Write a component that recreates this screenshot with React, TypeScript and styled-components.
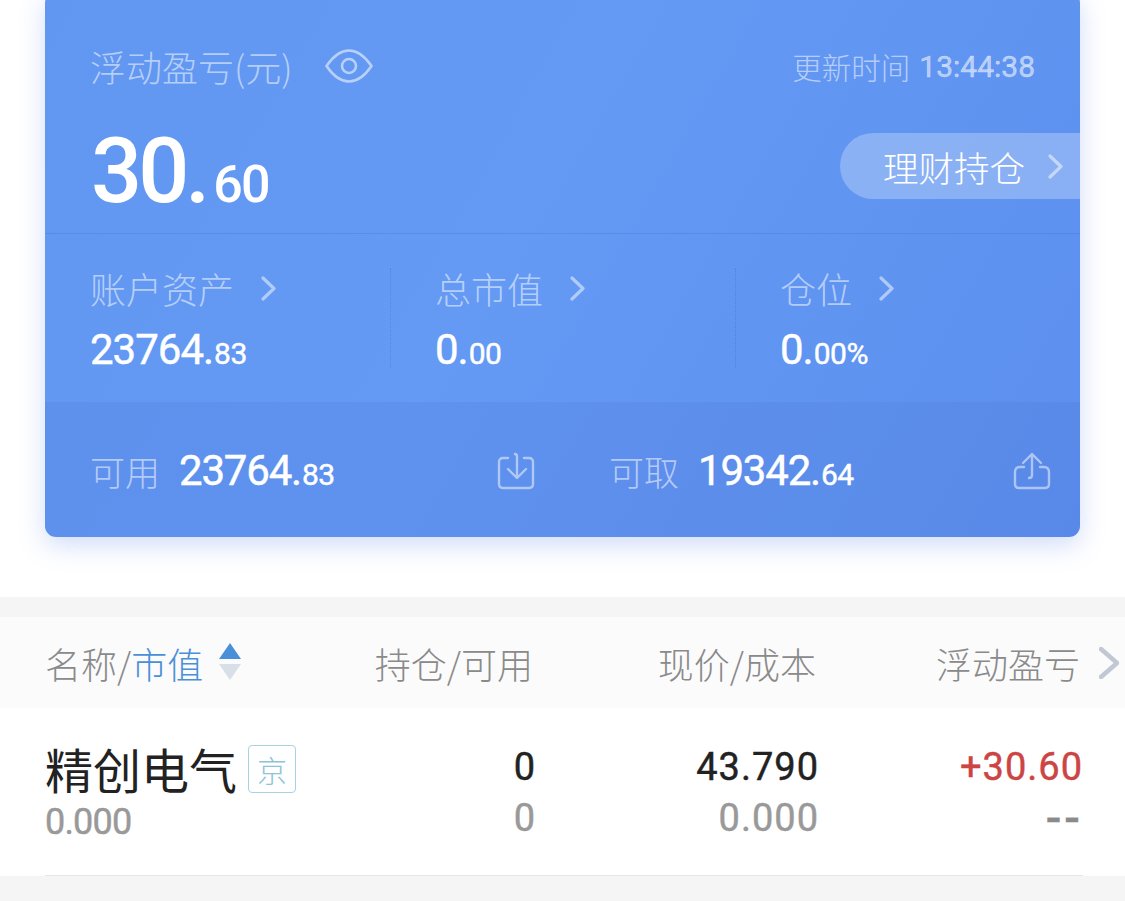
import React from "react";
import styled, { createGlobalStyle, css } from "styled-components";

const GlobalStyle = createGlobalStyle`
  html, body {
    margin: 0;
    padding: 0;
    background: #f5f5f5;
  }
  body {
    font-family: Roboto, "Noto Sans CJK SC", sans-serif;
  }
`;

// digits in the shot sit between Roboto regular and medium
const semiBold = css`
  font-weight: 400;
  -webkit-text-stroke: 0.45px currentColor;
`;

const Page = styled.div`
  width: 1125px;
  height: 901px;
  overflow: hidden;
  background: #fff;
  display: flex;
  flex-direction: column;
`;

const Card = styled.section`
  flex: none;
  margin: -8px 45px 0;
  height: 545px;
  border-radius: 11px;
  display: flex;
  flex-direction: column;
  overflow: hidden;
  background: linear-gradient(120deg, #6197f1 0%, #6499f4 45%, #5c8fee 100%);
  box-shadow: 0 8px 26px rgba(88, 128, 232, 0.28);
`;

const Summary = styled.div`
  flex: none;
  height: 242px;
  box-sizing: border-box;
  padding: 50px 0 0 45px;
  border-bottom: 1px solid rgba(60, 105, 200, 0.25);
`;

const SummaryHead = styled.div`
  display: flex;
  align-items: center;
  justify-content: space-between;
  height: 48px;
  padding-right: 45px;
`;

const Title = styled.div`
  display: flex;
  align-items: center;
  gap: 32px;
`;

const Label = styled.span`
  font-family: "Noto Sans CJK SC", sans-serif;
  font-weight: 300;
  font-size: 36px;
  line-height: 48px;
  color: rgba(255, 255, 255, 0.55);
  white-space: nowrap;
`;

const UpdatedAt = styled.div`
  display: flex;
  gap: 9px;
  align-items: center;
  font-size: 30px;
  color: rgba(255, 255, 255, 0.55);
`;

const UpdatedLabel = styled.span`
  font-family: "Noto Sans CJK SC", sans-serif;
  font-weight: 300;
  font-size: 29.5px;
`;

const UpdatedTime = styled.span`
  ${semiBold}
`;

const ProfitRow = styled.div`
  display: flex;
  align-items: flex-start;
  justify-content: space-between;
  margin-top: 37px;
`;

const AmountText = styled.div<{ $size: number; $small: number; $track: number; $gap: number; $bold?: boolean }>`
  color: #fff;
  font-size: ${(p) => p.$size}px;
  ${(p) => (p.$bold ? "font-weight: 500;" : semiBold)}
  line-height: 1;
  letter-spacing: ${(p) => p.$track}px;
  white-space: nowrap;
  small {
    margin-left: ${(p) => p.$gap}px;
    font-size: ${(p) => p.$small}px;
    letter-spacing: ${(p) => p.$track * 0.5}px;
  }
`;

const Amount = ({
  value,
  size,
  small,
  track = -1,
  gap = 1,
  suffix = "",
  bold = false,
}: {
  value: string;
  size: number;
  small: number;
  track?: number;
  gap?: number;
  suffix?: string;
  bold?: boolean;
}) => {
  const [whole, cents] = value.split(".");
  return (
    <AmountText $size={size} $small={small} $track={track} $gap={gap} $bold={bold}>
      {whole}.<small>{cents}{suffix}</small>
    </AmountText>
  );
};

const BigAmount = styled.div`
  padding-left: 1px;
`;

const Pill = styled.div`
  width: 240px;
  height: 66px;
  margin-top: 6px;
  box-sizing: border-box;
  padding-left: 43px;
  display: flex;
  align-items: center;
  gap: 23px;
  border-radius: 33px 0 0 33px;
  background: rgba(255, 255, 255, 0.27);
  color: #fff;
  font-family: "Noto Sans CJK SC", sans-serif;
  font-weight: 300;
  font-size: 35.5px;
`;

const Stats = styled.div`
  flex: none;
  height: 168px;
  box-sizing: border-box;
  padding-top: 34px;
  display: grid;
  grid-template-columns: repeat(3, 345px);
`;

const Stat = styled.div`
  height: 100px;
  box-sizing: border-box;
  padding-left: 45px;
  border-left: 1px dotted rgba(60, 105, 200, 0.4);
  &:first-child {
    border-left: 0;
  }
  & + & {
    padding-left: 44px;
  }
`;

const StatLabel = styled.div`
  display: flex;
  align-items: center;
  gap: 27px;
  height: 44px;
  margin-top: -2px;
`;

const StatValue = styled.div`
  margin-top: 19px;
`;

const Funds = styled.div`
  flex: 1;
  display: grid;
  grid-template-columns: 518px 1fr;
  align-items: center;
  padding-top: 2px;
  background: rgba(62, 88, 190, 0.1);
`;

const Fund = styled.div`
  display: flex;
  align-items: center;
  padding-left: 45px;
  padding-right: 28px;
  & + & {
    padding-left: 46px;
    padding-right: 29px;
  }
`;

const FundLabel = styled(Label)`
  font-size: 35px;
  margin-right: 19px;
`;

const FundIcon = styled.svg`
  width: 38px;
  height: 38px;
  margin-left: auto;
  fill: none;
  stroke: rgba(255, 255, 255, 0.5);
  stroke-width: 2.4;
  stroke-linecap: round;
  stroke-linejoin: round;
`;

const Chevron = styled.svg<{ $w: number; $h: number; $color: string; $sw: number }>`
  flex: none;
  width: ${(p) => p.$w}px;
  height: ${(p) => p.$h}px;
  fill: none;
  stroke: ${(p) => p.$color};
  stroke-width: ${(p) => p.$sw};
  stroke-linecap: round;
  stroke-linejoin: round;
`;

const Arrow = ({ w = 15, h = 25, color = "rgba(255,255,255,0.5)", sw = 3.2 }) => (
  <Chevron $w={w} $h={h} $color={color} $sw={sw} viewBox={`0 0 ${w} ${h}`}>
    <path d={`M2 2 L${w - 2} ${h / 2} L2 ${h - 2}`} />
  </Chevron>
);

const GrayBand = styled.div`
  flex: none;
  margin-top: 60px;
  height: 20px;
  background: #f5f5f5;
`;

const Columns = styled.div`
  display: grid;
  grid-template-columns: 1fr 200px 283px 264px;
`;

const TableHead = styled(Columns)`
  position: relative;
  flex: none;
  height: 91px;
  box-sizing: border-box;
  padding: 0 45px 0 45px;
  align-items: center;
  background: #fbfbfc;
`;

const HeadCell = styled.div`
  font-family: "Noto Sans CJK SC", sans-serif;
  font-weight: 300;
  font-size: 36px;
  line-height: 44px;
  color: #8a8a8a;
  text-align: right;
  white-space: nowrap;
`;

const NameHead = styled(HeadCell)`
  display: flex;
  align-items: center;
  text-align: left;
  em {
    font-style: normal;
    color: #4a90d9;
  }
`;

const Sort = styled.div`
  display: flex;
  flex-direction: column;
  gap: 5px;
  margin-left: 16px;
  margin-top: -3px;
`;

const Triangle = styled.i<{ $down?: boolean }>`
  display: block;
  width: 0;
  height: 0;
  border-left: 11px solid transparent;
  border-right: 11px solid transparent;
  ${(p) =>
    p.$down
      ? "border-top: 16px solid #d9dfe7;"
      : "border-bottom: 16px solid #4a90d9;"}
`;

const MoreArrow = styled.div`
  position: absolute;
  right: 6px;
  top: 30px;
  display: flex;
`;

const Row = styled(Columns)`
  flex: none;
  height: 168px;
  box-sizing: border-box;
  margin: 0 42px 0 45px;
  padding-top: 36px;
  border-bottom: 1px solid #e6e6e6;
  background: #fff;
`;

const Name = styled.div`
  display: flex;
  align-items: center;
  gap: 11px;
  height: 48px;
  font-family: "Noto Sans CJK SC", sans-serif;
  font-weight: 400;
  font-size: 48px;
  color: #222;
`;

const Tag = styled.span`
  width: 48px;
  height: 48px;
  box-sizing: border-box;
  margin-top: 1px;
  display: flex;
  align-items: center;
  justify-content: center;
  border: 1.5px solid #a9d2e2;
  border-radius: 4px;
  font-weight: 300;
  font-size: 30px;
  color: #8fc3d8;
`;

const NameCell = styled.div`
  text-align: left;
`;

const NumCell = styled.div`
  text-align: right;
`;

const Top = styled.div<{ $red?: boolean }>`
  font-size: 38px;
  ${semiBold}
  line-height: 46px;
  letter-spacing: 1px;
  color: ${(p) => (p.$red ? "#cc4444" : "#222")};
`;

const Sub = styled.div`
  font-size: 38px;
  ${semiBold}
  line-height: 46px;
  margin-top: 5px;
  letter-spacing: 1px;
  color: #999;
`;

const SubLeft = styled(Sub)`
  font-size: 36px;
  margin-top: 7px;
  letter-spacing: -0.8px;
`;

const Dash = styled(Sub)`
  font-size: 46px;
  font-weight: 500;
  letter-spacing: 3px;
  color: #8a8a8a;
`;

const Filler = styled.div`
  flex: 1;
  background: #f5f5f5;
`;

const Eye = () => (
  <svg width="48" height="36" viewBox="0 0 48 36" fill="none" stroke="rgba(255,255,255,0.55)" strokeWidth="2.6">
    <path d="M1.5 18 C9 7 16 2.5 24 2.5 C32 2.5 39 7 46.5 18 C39 29 32 33.5 24 33.5 C16 33.5 9 29 1.5 18 Z" />
    <circle cx="24" cy="18" r="7" />
  </svg>
);

export default function App() {
  return (
    <Page>
      <GlobalStyle />
      <Card>
        <Summary>
          <SummaryHead>
            <Title>
              <Label>浮动盈亏(元)</Label>
              <Eye />
            </Title>
            <UpdatedAt>
              <UpdatedLabel>更新时间</UpdatedLabel>
              <UpdatedTime>13:44:38</UpdatedTime>
            </UpdatedAt>
          </SummaryHead>
          <ProfitRow>
            <BigAmount>
              <Amount value="30.60" size={90} small={52} track={-4} gap={7} bold />
            </BigAmount>
            <Pill>
              理财持仓
              <Arrow />
            </Pill>
          </ProfitRow>
        </Summary>
        <Stats>
          <Stat>
            <StatLabel>
              <Label>账户资产</Label>
              <Arrow />
            </StatLabel>
            <StatValue>
              <Amount value="23764.83" size={42} small={30} />
            </StatValue>
          </Stat>
          <Stat>
            <StatLabel>
              <Label>总市值</Label>
              <Arrow />
            </StatLabel>
            <StatValue>
              <Amount value="0.00" size={42} small={30} />
            </StatValue>
          </Stat>
          <Stat>
            <StatLabel>
              <Label>仓位</Label>
              <Arrow />
            </StatLabel>
            <StatValue>
              <Amount value="0.00" size={42} small={30} suffix="%" />
            </StatValue>
          </Stat>
        </Stats>
        <Funds>
          <Fund>
            <FundLabel>可用</FundLabel>
            <Amount value="23764.83" size={42} small={30} track={-1.2} />
            <FundIcon viewBox="0 0 38 38">
              <path d="M11 6 H6 Q2 6 2 10 V32 Q2 36 6 36 H32 Q36 36 36 32 V10 Q36 6 32 6 H27" />
              <path d="M18 2 Q20 2 20 5 V24 M11 17 L20 26 L29 17" />
            </FundIcon>
          </Fund>
          <Fund>
            <FundLabel>可取</FundLabel>
            <Amount value="19342.64" size={42} small={30} track={-1.2} />
            <FundIcon viewBox="0 0 38 38">
              <path d="M11 15 H7 Q2 15 2 20 V32 Q2 36 6 36 H32 Q36 36 36 32 V20 Q36 15 31 15 H27" />
              <path d="M10 11 L19 2 L28 11 M19 3 V23 Q19 26 16 26" />
            </FundIcon>
          </Fund>
        </Funds>
      </Card>
      <GrayBand />
      <TableHead>
        <NameHead>
          名称/<em>市值</em>
          <Sort>
            <Triangle />
            <Triangle $down />
          </Sort>
        </NameHead>
        <HeadCell>持仓/可用</HeadCell>
        <HeadCell>现价/成本</HeadCell>
        <HeadCell>浮动盈亏</HeadCell>
        <MoreArrow>
          <Arrow w={20} h={32} color="#c0c8d4" sw={4.5} />
        </MoreArrow>
      </TableHead>
      <Row>
        <NameCell>
          <Name>
            精创电气
            <Tag>京</Tag>
          </Name>
          <SubLeft>0.000</SubLeft>
        </NameCell>
        <NumCell>
          <Top>0</Top>
          <Sub>0</Sub>
        </NumCell>
        <NumCell>
          <Top>43.790</Top>
          <Sub>0.000</Sub>
        </NumCell>
        <NumCell>
          <Top $red>+30.60</Top>
          <Dash>--</Dash>
        </NumCell>
      </Row>
      <Filler />
    </Page>
  );
}
